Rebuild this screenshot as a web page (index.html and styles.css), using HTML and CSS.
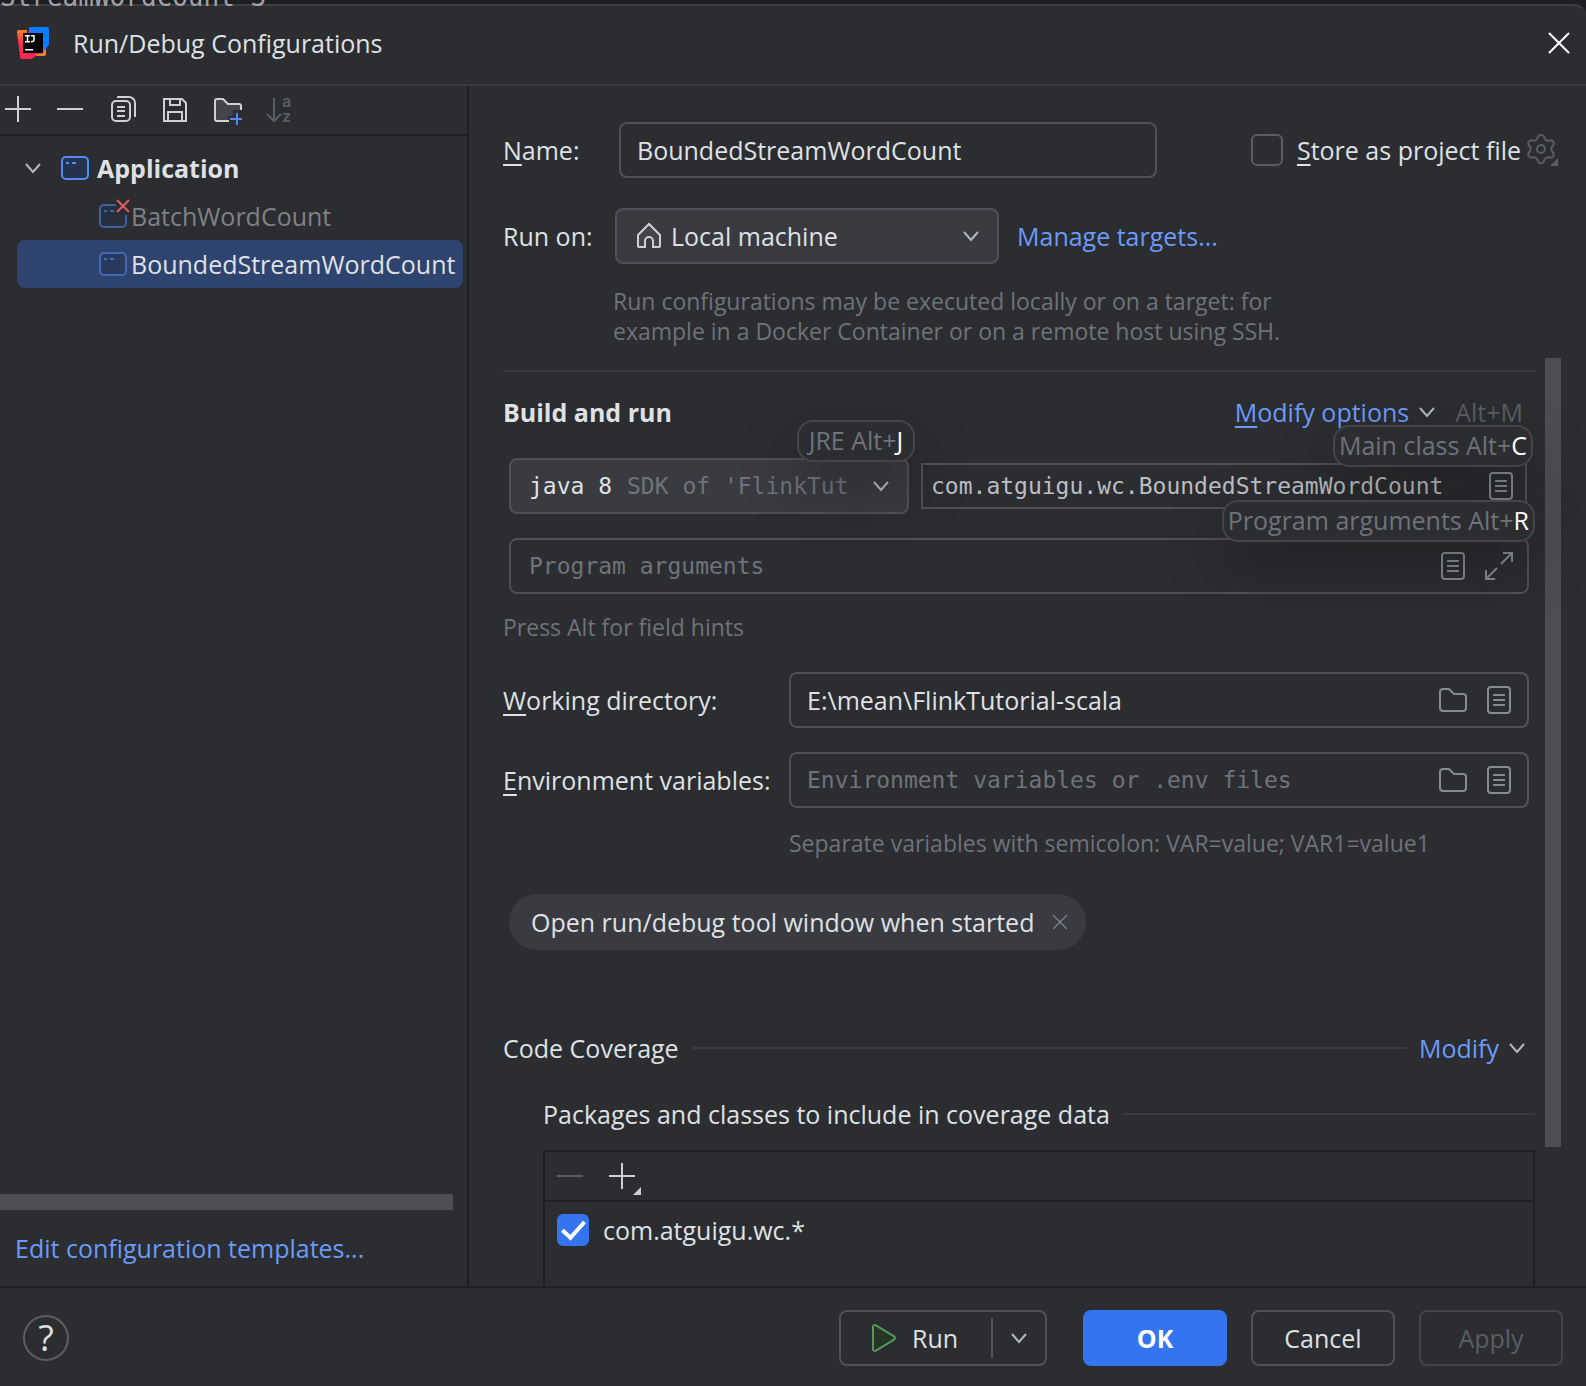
FILE: index.html
```html
<!DOCTYPE html>
<html lang="en">
<head>
  <meta charset="UTF-8">
  <meta name="viewport" content="width=device-width, initial-scale=1">
  <title>Run/Debug Configurations</title>
  <link rel="stylesheet" href="styles.css">
</head>
<body>
  <!-- shared icons -->
  <svg class="sprite" aria-hidden="true">
    <symbol id="i-plus" viewBox="0 0 32 32"><path d="M16 3v26M3 16h26"/></symbol>
    <symbol id="i-minus" viewBox="0 0 32 32"><path d="M3 16h26"/></symbol>
    <symbol id="i-copy" viewBox="0 0 32 32"><rect x="6" y="8" width="18" height="20" rx="4"/><path d="M11 4h12a6 6 0 0 1 6 6v14M11 14h8M11 18h8M11 23h8"/></symbol>
    <symbol id="i-save" viewBox="0 0 32 32"><path d="M6 6h18l4 4v18H6zM12 6v6h10V6M10 28v-9h14v9"/></symbol>
    <symbol id="i-folder-add" viewBox="0 0 32 32"><path fill="#43454a" stroke="none" d="M5 8a2 2 0 0 1 2-2h6l5 5h10a2 2 0 0 1 2 2v4h-7v6h-5v5H7a2 2 0 0 1-2-2z"/><path d="M19 28H7a2 2 0 0 1-2-2V8a2 2 0 0 1 2-2h6l5 5h11a2 2 0 0 1 2 2v4"/><path stroke="#548af7" d="M27 20v13M20 26h14"/></symbol>
    <symbol id="i-sort" viewBox="0 0 32 32"><path d="M12 5v23M5 21l7 7 7-7"/></symbol>
    <symbol id="i-chevron" viewBox="0 0 16 16"><path d="M1 4l7 8 7-8"/></symbol>
    <symbol id="i-app" viewBox="0 0 32 32"><rect x="3" y="5" width="26" height="22" rx="4" fill="#25324d"/><path d="M7 11h3M13 11h4"/></symbol>
    <symbol id="i-home" viewBox="0 0 32 32"><path fill="#43454a" d="M5 15L16 4l11 11v11a1 1 0 0 1-1 1h-6v-6a4 4 0 0 0-8 0v6H6a1 1 0 0 1-1-1z"/></symbol>
    <symbol id="i-list" viewBox="0 0 32 32"><rect x="5" y="3" width="22" height="26" rx="3"/><path d="M10 11h12M10 16h12M10 21h12"/></symbol>
    <symbol id="i-folder" viewBox="0 0 32 32"><path d="M3 8a3 3 0 0 1 3-3h6l5 5h9a3 3 0 0 1 3 3v11a3 3 0 0 1-3 3H6a3 3 0 0 1-3-3z"/></symbol>
    <symbol id="i-expand" viewBox="0 0 32 32"><path d="M18 14L29 3M20 3h9v9M14 18L3 29M3 20v9h9"/></symbol>
    <symbol id="i-close" viewBox="0 0 32 32"><path d="M6 6l20 20M26 6L6 26"/></symbol>
    <symbol id="i-gear" viewBox="0 0 32 32"><circle cx="14" cy="15" r="4"/><path transform="translate(-1)" d="M12.3 2.3a3.2 3.2 0 0 1 5.4 0Q19.100 7.900 24.700 6.300A3.200 3.200 0 0 1 27.400 11Q23.200 15 27.400 19A3.200 3.200 0 0 1 24.700 23.700Q19.100 22.100 17.700 27.700A3.200 3.200 0 0 1 12.300 27.700Q10.900 22.100 5.300 23.700A3.200 3.200 0 0 1 2.600 19Q6.800 15 2.600 11A3.200 3.200 0 0 1 5.300 6.300Q10.900 7.900 12.300 2.300z"/><path fill="currentColor" stroke="none" d="M31 24v8h-8z"/></symbol>
    <symbol id="i-play" viewBox="0 0 32 32"><path fill="#253627" d="M5 4.500a2 2 0 0 1 3-1.200l18 11a2 2 0 0 1 0 3.400l-18 11a2 2 0 0 1-3-1.200z"/></symbol>
  </svg>

  <div class="backdrop">StreamWordCount 3</div>

  <div class="dialog">
    <header class="titlebar">
      <svg class="logo" viewBox="0 0 32 32" aria-hidden="true">
        <defs>
          <linearGradient id="lg-a" x1="0" y1="0" x2="0" y2="1"><stop offset="0" stop-color="#fc801d"/><stop offset=".5" stop-color="#fe2857"/></linearGradient>
          <linearGradient id="lg-b" x1="0" y1="1" x2="1" y2="0"><stop offset="0" stop-color="#fe2857"/><stop offset=".4" stop-color="#6b57ff"/><stop offset=".6" stop-color="#087cfa"/></linearGradient>
        </defs>
        <path fill="#fc801d" d="M20 20h9v7a2 2 0 0 1-2 2h-9z"/>
        <path fill="url(#lg-b)" d="M12 1.500A2 2 0 0 1 14 0h16a2 2 0 0 1 2 2v16l-8 9H10z"/>
        <path fill="url(#lg-a)" d="M0 5a2 2 0 0 1 2-2h8v20h16l-10 8a4 4 0 0 1-3 1H5a2 2 0 0 1-2-2z"/>
        <path d="M6 6h20v20H6z"/>
        <path fill="none" stroke="#fff" stroke-width="1.500" d="M8 8.700h5M10.500 8.700v6M8 14.700h5M14 8.700h3v4q0 2-3 2"/>
        <path fill="#fff" d="M8 22h8v1.500H8z"/>
      </svg>
      <h1>Run/Debug Configurations</h1>
      <button class="icon-btn close" aria-label="Close"><svg class="icon"><use href="#i-close"/></svg></button>
    </header>

    <div class="content">
      <aside class="sidebar">
        <div class="toolbar">
          <button class="icon-btn" aria-label="Add"><svg class="icon"><use href="#i-plus"/></svg></button>
          <button class="icon-btn" aria-label="Remove"><svg class="icon"><use href="#i-minus"/></svg></button>
          <button class="icon-btn" aria-label="Copy"><svg class="icon"><use href="#i-copy"/></svg></button>
          <button class="icon-btn" aria-label="Save"><svg class="icon"><use href="#i-save"/></svg></button>
          <button class="icon-btn" aria-label="New folder"><svg class="icon"><use href="#i-folder-add"/></svg></button>
          <button class="icon-btn off" aria-label="Sort" disabled><svg class="icon" viewBox="0 0 32 32"><use href="#i-sort"/><text x="20" y="14">a</text><text x="20" y="29">z</text></svg></button>
        </div>
        <ul class="tree">
          <li class="node group"><svg class="chevron"><use href="#i-chevron"/></svg><svg class="icon app"><use href="#i-app"/></svg>Application</li>
          <li class="node leaf invalid">
            <svg class="icon app" viewBox="0 0 32 32"><path class="fade" fill="#25324d" stroke="none" d="M3 5h16l10 10v12H3z"/><path class="fade" d="M19 5H7a4 4 0 0 0-4 4v14a4 4 0 0 0 4 4h18a4 4 0 0 0 4-4v-8M7 11h3M13 11h4"/><path stroke="#db5c5c" d="M20 0l12 12M32 0L20 12"/></svg>BatchWordCount
          </li>
          <li class="node leaf selected"><svg class="icon app fade"><use href="#i-app"/></svg>BoundedStreamWordCount</li>
        </ul>
        <div class="h-thumb"></div>
        <a class="link templates" href="#">Edit configuration templates...</a>
      </aside>

      <main class="editor">
        <div class="row name-row">
          <label for="name"><u>N</u>ame:</label>
          <div class="field"><input id="name" type="text" value="BoundedStreamWordCount"></div>
          <div class="store">
            <input class="check" id="store" type="checkbox">
            <label for="store"><u>S</u>tore as project file</label>
            <button class="icon-btn off" aria-label="Storage options"><svg class="icon"><use href="#i-gear"/></svg></button>
          </div>
        </div>

        <div class="row target-row">
          <label for="target">Run on:</label>
          <div class="field combo">
            <svg class="icon"><use href="#i-home"/></svg>
            <select id="target"><option>Local machine</option></select>
            <svg class="chevron"><use href="#i-chevron"/></svg>
          </div>
          <a class="link" href="#">Manage targets...</a>
        </div>
        <p class="hint target-hint">Run configurations may be executed locally or on a target: for<br>example in a Docker Container or on a remote host using SSH.</p>

        <div class="scroller">
          <div class="options">
            <div class="section-head">
              <h2>Build and run</h2>
              <a class="link" href="#"><u>M</u>odify options</a>
              <svg class="chevron"><use href="#i-chevron"/></svg>
              <span class="shortcut">Alt+M</span>
            </div>

            <div class="row run-row">
              <div class="field combo mono">
                <select id="jre" aria-label="JRE"><option>java 8</option></select>
                <span class="sdk">SDK of 'FlinkTut</span>
                <svg class="chevron"><use href="#i-chevron"/></svg>
                <span class="tip">JRE Alt+<b>J</b></span>
              </div>
              <div class="field square mono">
                <input id="main-class" type="text" aria-label="Main class" value="com.atguigu.wc.BoundedStreamWordCount">
                <button class="icon-btn" aria-label="Browse classes"><svg class="icon"><use href="#i-list"/></svg></button>
                <span class="tip">Main class Alt+<b>C</b></span>
              </div>
            </div>

            <div class="field mono args">
              <input id="args" type="text" aria-label="Program arguments" placeholder="Program arguments">
              <button class="icon-btn" aria-label="Insert macros"><svg class="icon"><use href="#i-list"/></svg></button>
              <button class="icon-btn" aria-label="Expand"><svg class="icon"><use href="#i-expand"/></svg></button>
              <span class="tip">Program arguments Alt+<b>R</b></span>
            </div>
            <p class="hint alt-hint">Press Alt for field hints</p>

            <div class="form-grid">
              <label for="workdir"><u>W</u>orking directory:</label>
              <div class="field">
                <input id="workdir" type="text" value="E:\mean\FlinkTutorial-scala">
                <button class="icon-btn" aria-label="Browse"><svg class="icon"><use href="#i-folder"/></svg></button>
                <button class="icon-btn" aria-label="Insert macros"><svg class="icon"><use href="#i-list"/></svg></button>
              </div>
              <label for="env"><u>E</u>nvironment variables:</label>
              <div class="field mono">
                <input id="env" type="text" placeholder="Environment variables or .env files">
                <button class="icon-btn" aria-label="Browse"><svg class="icon"><use href="#i-folder"/></svg></button>
                <button class="icon-btn" aria-label="Edit variables"><svg class="icon"><use href="#i-list"/></svg></button>
              </div>
            </div>
            <p class="hint env-hint">Separate variables with semicolon: VAR=value; VAR1=value1</p>

            <div class="tag">Open run/debug tool window when started
              <button class="icon-btn" aria-label="Remove option"><svg class="icon"><use href="#i-close"/></svg></button>
            </div>

            <div class="titled coverage-head">
              <span>Code Coverage</span>
              <hr>
              <a class="link" href="#">Modify</a>
              <svg class="chevron"><use href="#i-chevron"/></svg>
            </div>
            <div class="titled packages-head">
              <span>Packages and classes to include in coverage data</span>
              <hr>
            </div>
            <div class="packages">
              <div class="packages-bar">
                <button class="icon-btn off" aria-label="Remove" disabled><svg class="icon"><use href="#i-minus"/></svg></button>
                <button class="icon-btn more" aria-label="Add"><svg class="icon"><use href="#i-plus"/></svg></button>
              </div>
              <label class="package"><input class="check" type="checkbox" checked>com.atguigu.wc.*</label>
            </div>
          </div>
          <div class="v-thumb"></div>
        </div>
      </main>
    </div>

    <footer class="footer">
      <button class="help" aria-label="Help">?</button>
      <div class="split">
        <button class="run"><svg class="icon"><use href="#i-play"/></svg>Run</button>
        <button class="run-more" aria-label="More run options"><svg class="chevron"><use href="#i-chevron"/></svg></button>
      </div>
      <button class="btn primary">OK</button>
      <button class="btn">Cancel</button>
      <button class="btn" disabled>Apply</button>
    </footer>
  </div>
</body>
</html>
```

FILE: styles.css
```css
* {
  box-sizing: border-box;
}
body {
  margin: 0;
  min-height: 100vh;
  display: flex;
  flex-direction: column;
  background: #1e1f22;
  color: #dfe1e5;
  font-family: "Open Sans", "Noto Sans", sans-serif;
  font-size: 25px;
  line-height: 32px;
}
button, input, select {
  font: inherit;
  color: inherit;
  background: none;
  border: none;
  padding: 0;
  margin: 0;
  outline: none;
}
h1, h2, p, ul {
  margin: 0;
  padding: 0;
}
h1 {
  font-size: 25px;
  font-weight: 400;
}
h2 {
  font-size: 25px;
  font-weight: 700;
}
u {
  text-decoration-thickness: 2px;
  text-underline-offset: 4px;
}
.sprite {
  position: absolute;
  width: 0;
  height: 0;
}
.icon, .chevron {
  display: block;
  flex: none;
  width: 32px;
  height: 32px;
  fill: none;
  stroke: currentColor;
  stroke-width: 2;
  overflow: visible;
}
.chevron {
  width: 16px;
  height: 16px;
  color: #b4b8bf;
}
.icon-btn {
  flex: none;
  width: 32px;
  height: 32px;
  color: #ced0d6;
  cursor: pointer;
}
.icon-btn.off {
  color: #5a5d63;
}
.link {
  color: #6b9bfa;
  text-decoration: none;
}
.hint {
  color: #6f737a;
  font-size: 23px;
  line-height: 30px;
}

/* editor line behind the dialog */
.backdrop {
  z-index: 1;
  height: 6px;
  margin-bottom: -2px;
  overflow: hidden;
  display: flex;
  align-items: flex-end;
  font-family: "DejaVu Sans Mono", monospace;
  font-size: 26px;
  line-height: 18px;
  color: #a0a2a8;
}
.dialog {
  flex: 1;
  display: flex;
  flex-direction: column;
  background: #2b2d30;
  border-top: 2px solid #3c3f41;
  border-radius: 0 12px 0 0;
}
.titlebar {
  display: flex;
  align-items: center;
  height: 80px;
  padding: 0 11px 4px 17px;
  border-bottom: 2px solid #393b40;
}
.logo {
  width: 32px;
  height: 32px;
  margin-right: 24px;
}
.close {
  margin-left: auto;
  color: #fff;
}
.content {
  flex: 1;
  display: flex;
}

/* sidebar */
.sidebar {
  width: 469px;
  flex: none;
  display: flex;
  flex-direction: column;
  border-right: 2px solid #1e1f22;
}
.toolbar {
  display: flex;
  align-items: center;
  gap: 20px;
  height: 50px;
  padding: 0 0 2px 2px;
  border-bottom: 2px solid #1e1f22;
}
.toolbar text {
  fill: currentColor;
  stroke: none;
  font: 600 16px/1 "Inter", sans-serif;
}
.tree {
  list-style: none;
  flex: 1;
  padding: 8px 4px 0 17px;
}
.node {
  display: flex;
  align-items: center;
  height: 48px;
  border-radius: 8px;
}
.node.group {
  padding-left: 8px;
  font-weight: 700;
}
.node .chevron {
  margin-right: 18px;
}
.node.group .app {
  margin-right: 6px;
}
.node.leaf {
  padding-left: 80px;
}
.node.leaf .app {
  margin-right: 2px;
}
.node.invalid {
  color: #7f8187;
}
.node.selected {
  background: #2e436e;
}
.app {
  color: #548af7;
}
.fade {
  opacity: .55;
}
.h-thumb {
  height: 16px;
  margin-right: 14px;
  background: #4d4e51;
}
.templates {
  padding: 22px 15px;
}

/* editor */
.editor {
  flex: 1;
  min-width: 0;
  display: flex;
  flex-direction: column;
  padding: 36px 25px 0 34px;
}
.row {
  display: flex;
  align-items: center;
}
.field {
  position: relative;
  display: flex;
  align-items: center;
  gap: 14px;
  height: 56px;
  padding: 0 12px 0 16px;
  border: 2px solid #4e5157;
  border-radius: 8px;
}
.field input {
  flex: 1;
  min-width: 0;
}
.field .icon-btn {
  color: #868a91;
}
.mono input, .mono select, .sdk {
  font-family: "DejaVu Sans Mono", monospace;
  font-size: 23px;
}
::placeholder {
  color: #6f737a;
  opacity: 1;
}
.combo {
  gap: 6px;
  padding: 0 18px 0 16px;
  background: #393b40;
}
.combo .icon {
  color: #ced0d6;
}
.combo select {
  appearance: none;
  flex: 1;
}
.check {
  appearance: none;
  flex: none;
  width: 32px;
  height: 32px;
  border: 2px solid #5a5d63;
  border-radius: 6px;
}
.check:checked {
  display: grid;
  place-items: center;
  background: #3574f0;
  border-color: #3574f0;
}
.check:checked::after {
  content: "";
  width: 9px;
  height: 19px;
  margin-bottom: 6px;
  border: solid #fff;
  border-width: 0 4px 4px 0;
  transform: rotate(42deg);
}
.name-row > label {
  width: 116px;
}
.name-row .field {
  flex: 1;
}
.store {
  display: flex;
  align-items: center;
  margin-left: 94px;
}
.store label {
  margin: 0 6px 0 14px;
}
.store .icon-btn {
  margin-right: 2px;
}
.target-row {
  margin-top: 30px;
}
.target-row > label {
  width: 112px;
}
.target-row .combo {
  width: 384px;
  margin-right: 18px;
}
.target-hint {
  margin: 22px 0 12px 110px;
}

/* scrollable options */
.scroller {
  flex: 1;
  display: flex;
  gap: 10px;
}
.v-thumb {
  width: 16px;
  height: 85%;
  background: #4d4e51;
}
.options {
  flex: 1;
  min-width: 0;
  display: flex;
  flex-direction: column;
  margin-top: 12px;
  border-top: 2px solid #393b40;
}
.section-head {
  display: flex;
  align-items: center;
  margin: 24px 12px 30px 0;
}
.section-head h2 {
  margin-right: auto;
}
.section-head .chevron {
  margin: 0 20px 0 10px;
}
.shortcut {
  color: #5a5d63;
}
.run-row {
  gap: 12px;
  padding: 0 8px 0 6px;
}
.run-row .combo {
  width: 400px;
  gap: 14px;
  padding-left: 18px;
}
.run-row select {
  flex: none;
}
.sdk {
  flex: 1;
  overflow: hidden;
  white-space: nowrap;
  color: #6f737a;
}
.square {
  flex: 1;
  height: 46px;
  padding: 0 8px;
  border-radius: 0;
  color: #bcbec4;
}
.args {
  margin: 24px 6px 0;
  padding-left: 18px;
}
.tip {
  position: absolute;
  z-index: 1;
  right: -8px;
  top: -40px;
  min-width: 118px;
  height: 42px;
  padding: 2px 4px;
  border: 2px solid #43454a;
  border-radius: 16px;
  background: #2b2d30;
  box-shadow: 0 24px 60px rgba(0, 0, 0, .3);
  color: #6f737a;
  text-align: center;
  white-space: nowrap;
}
.tip b {
  color: #fff;
  font-weight: 400;
}
.alt-hint {
  margin: 18px 0 30px;
}
.form-grid {
  display: grid;
  grid-template-columns: 286px 1fr;
  align-items: center;
  row-gap: 24px;
  padding-right: 6px;
}
.env-hint {
  margin: 20px 0 36px 286px;
}
.tag {
  align-self: flex-start;
  display: flex;
  align-items: center;
  gap: 10px;
  height: 56px;
  margin: 0 6px 82px;
  padding: 0 10px 0 22px;
  border-radius: 28px;
  background: #393b40;
}
.tag .icon-btn {
  color: #868a91;
}
.tag .icon {
  width: 22px;
  height: 22px;
  margin: 0 auto;
}
.titled {
  display: flex;
  align-items: center;
}
.titled hr {
  flex: 1;
  height: 2px;
  margin: 0 0 0 13px;
  border: none;
  background: #393b40;
}
.coverage-head {
  margin: 0 10px 34px 0;
}
.coverage-head .link {
  margin: 0 10px 0 12px;
}
.packages-head {
  margin: 0 0 20px 40px;
}
.packages {
  flex: 1;
  margin-left: 40px;
  border: 2px solid #1e1f22;
  border-bottom: none;
}
.packages-bar {
  display: flex;
  align-items: center;
  gap: 20px;
  height: 50px;
  padding: 0 9px;
  border-bottom: 2px solid #1e1f22;
}
.more {
  position: relative;
}
.more::after {
  content: "";
  position: absolute;
  right: -3px;
  bottom: -3px;
  border: 4px solid;
  border-color: transparent currentColor currentColor transparent;
}
.package {
  display: flex;
  align-items: center;
  gap: 14px;
  padding: 12px;
}

/* bottom buttons */
.footer {
  display: flex;
  align-items: center;
  gap: 24px;
  padding: 22px 23px 20px;
  border-top: 2px solid #1e1f22;
}
.help {
  width: 46px;
  height: 46px;
  margin-right: auto;
  border: 2px solid #5a5d63;
  border-radius: 50%;
  font-size: 36px;
}
.split {
  display: flex;
  align-items: center;
  height: 56px;
  margin-right: 12px;
  border: 2px solid #4e5157;
  border-radius: 8px;
}
.run {
  display: flex;
  align-items: center;
  gap: 12px;
  width: 150px;
  padding-left: 27px;
}
.run .icon {
  color: #57965c;
}
.run-more {
  display: grid;
  place-items: center;
  width: 54px;
  height: 40px;
  border-left: 2px solid #4e5157;
}
.btn {
  width: 144px;
  height: 56px;
  border: 2px solid #4e5157;
  border-radius: 8px;
}
.btn:disabled {
  border-color: #43454a;
  color: #5a5d63;
}
.primary {
  background: #3574f0;
  border-color: #3574f0;
  color: #fff;
  font-weight: 700;
}
```
